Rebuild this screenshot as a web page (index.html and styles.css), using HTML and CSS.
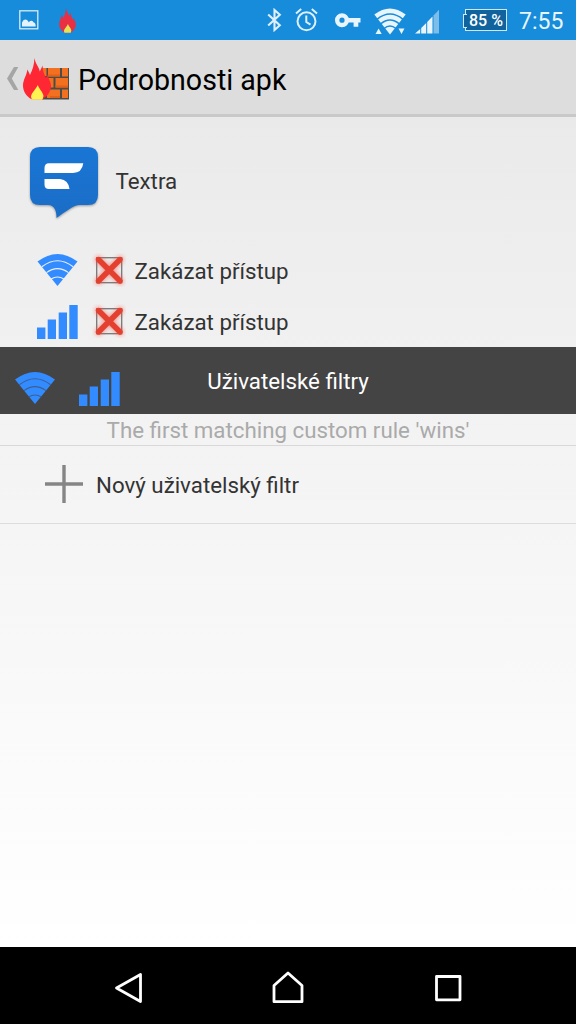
FILE: index.html
```html
<!DOCTYPE html>
<html lang="cs">
<head>
    <meta charset="UTF-8">
    <meta name="viewport" content="width=device-width, initial-scale=1.0">
    <title>Podrobnosti apk</title>
    <link rel="stylesheet" href="styles.css">
</head>
<body>
    <!-- shared icons -->
    <svg class="sprite" width="0" height="0">
        <symbol id="wifi" viewBox="0 0 40 32">
            <path fill="#338cff" d="M0 7.6Q20 -7.6 40 7.6L20 32Z"/>
            <g fill="none" stroke="var(--gap)" stroke-width="1.1">
                <path d="M4.4 12.8Q20 .6 35.6 12.8"/>
                <path d="M9 18.6Q20 10.6 31 18.6"/>
                <path d="M13.6 25Q20 21 26.4 25"/>
            </g>
        </symbol>
        <symbol id="cell" viewBox="0 0 41 34">
            <path fill="#338cff" d="M0 22.6h8.4V34H0zM10.7 14.5H19V34h-8.3zM21.7 7.4H30V34h-8.3zM32.3 0h8.4v34h-8.4z"/>
        </symbol>
        <symbol id="deny" viewBox="0 0 34 34">
            <rect x="4.7" y="4.7" width="25" height="25" fill="#ececec" stroke="#777" stroke-width="1.3"/>
            <path class="deny-glow" d="M6.5 6.5L28 28M28 6.5L6.5 28" stroke="#ff4030" stroke-width="7" stroke-linecap="round"/>
            <path d="M6.5 6.5L28 28M28 6.5L6.5 28" stroke="#e4402f" stroke-width="5.4" stroke-linecap="round"/>
        </symbol>
        <symbol id="flame" viewBox="0 0 28 42">
            <path fill="var(--fire)" d="M11.3 0C12.5 6 16 9 16.8 13.5L19.6 7.5C19.5 12 21 16 23 20L24.8 16.5C25 21 28 23.5 28 28C28 34 23.5 39 19.5 41.3H8.5C3 38 0 33 0 27.5C0 22 3.2 18.5 4.5 11.5L7 17C9.5 12 11.5 6 11.3 0Z"/>
            <path fill="var(--core)" d="M14.8 27C16 31 20 34 20.5 38L19.5 41.5H8.8L8 38.5C8.5 35 12.5 31.5 14.8 27Z"/>
        </symbol>
    </svg>

    <header class="status-bar">
        <svg class="st-image" width="20" height="20" viewBox="0 0 20 20">
            <rect x=".8" y=".8" width="18" height="18" fill="none" stroke="#d9edfa" stroke-width="1.3"/>
            <path fill="#e3f2fc" d="M3 16.5V12.5Q4.5 8.5 7.5 9.7Q9 10.5 9.8 12.2Q12.5 9.5 14.5 12.2Q16.7 12.5 16.7 16.5Z"/>
        </svg>
        <svg class="st-flame" width="17" height="25"><use href="#flame"/></svg>

        <svg class="st-bluetooth" width="15" height="24" viewBox="0 0 15 24">
            <path fill="none" stroke="#dff0fb" stroke-width="2.1" d="M1.2 6.5L12.8 17.3L7.5 22V2L12.8 6.7L1.2 17.5"/>
        </svg>
        <svg class="st-alarm" width="23" height="24" viewBox="0 0 23 24">
            <g fill="none" stroke="#dff0fb" stroke-width="2">
                <circle cx="11.5" cy="13.3" r="9"/>
                <path d="M11.3 7.5V14L15.5 16.6M1 5.4L6.2 1M16.8 1L22 5.4"/>
            </g>
        </svg>
        <svg class="st-key" width="26" height="15" viewBox="0 0 26 15">
            <circle cx="7" cy="7.2" r="4.8" fill="none" stroke="#e8f5fd" stroke-width="4.4"/>
            <path fill="#e8f5fd" d="M12.5 5H25.5V9.6H23.3V13.8H18.6V9.6H12.5Z"/>
        </svg>
        <svg class="st-wifi" width="32" height="27" viewBox="0 0 32 27">
            <path fill="#e8f5fd" d="M.3 6.6Q16 -5.4 31.7 6.6L16 26.5Z"/>
            <g fill="none" stroke="#168cda" stroke-width="1.6">
                <path d="M3 11.3Q16 .7 29 11.3"/>
                <path d="M6.500 16Q16 8 25.500 16"/>
                <path d="M10 20.500Q16 15.500 22 20.500"/>
            </g>
            <path fill="#e8f5fd" d="M1.5 26L4.6 20.500L7.700 26ZM24.500 20.500H30.500L27.500 26Z"/>
        </svg>
        <svg class="st-signal" width="25" height="25" viewBox="0 0 25 25">
            <path fill="#e8f5fd" d="M0 24.5L5.2 20V24.500ZM6.200 19L11.200 14V24.500H6.200ZM12.200 13L17.500 7.500V24.500H12.200Z"/>
            <path fill="#7dbdea" d="M18.500 6.500L24 .8V24.500H18.500Z"/>
        </svg>
        <div class="battery"><span>85 %</span></div>
        <time class="clock">7:55</time>
    </header>

    <div class="action-bar">
        <svg class="back-arrow" width="12" height="23" viewBox="0 0 12 23">
            <path fill="#a5a5a5" d="M7 0H11.3L4.8 11.5L11.3 23H7L0 11.5Z"/>
        </svg>
        <svg class="app-icon" width="47" height="42" viewBox="0 0 47 42">
            <rect x="19" y="10" width="27" height="31.5" fill="#4d4d48"/>
            <g fill="#f2701f">
                <path d="M19 10H23.500V18H19ZM25 10H37V18.500H25ZM39 10H45V18.500H39Z"/>
                <path d="M20 20H30.500V29.500H20ZM32.500 20H45V29.500H32.500Z"/>
                <path d="M24 31.500H37V40H24ZM39 31.500H45V40H39Z"/>
            </g>
            <path fill="#e45f18" d="M25 16.500H37V18.500H25ZM32.500 27.500H45V29.500H32.500ZM27 38H37V40H27Z"/>
            <use href="#flame" width="28" height="42"/>
        </svg>
        <h1>Podrobnosti apk</h1>
    </div>

    <main>
        <section class="app-info">
            <svg class="app-logo" width="76" height="78" viewBox="0 0 76 78">
                <defs>
                    <linearGradient id="logoFill" x1="0" y1="0" x2="0" y2="1">
                        <stop offset="0" stop-color="#1976d5"/>
                        <stop offset="1" stop-color="#1b6dc6"/>
                    </linearGradient>
                </defs>
                <path fill="url(#logoFill)" d="M14 3H62Q72 3 72 13V51Q72 61 62 61H54C47 61 38 69 30.5 74C30.5 68 29 61 22 61H14Q4 61 4 51V13Q4 3 14 3Z"/>
                <path fill="#fff" d="M23 19.3H57.3Q56 29 47 29H18.5V24Q18.5 19.3 23 19.3ZM18.5 35H34Q42.5 36 43.5 45H23Q18.5 45 18.5 40.5Z"/>
            </svg>
            <span>Textra</span>
        </section>

        <section class="access-list">
            <div class="access-row">
                <svg width="40" height="32"><use href="#wifi"/></svg>
                <svg class="check" width="34" height="34"><use href="#deny"/></svg>
                <span>Zakázat přístup</span>
            </div>
            <div class="access-row">
                <svg class="cell" width="41" height="34"><use href="#cell"/></svg>
                <svg class="check" width="34" height="34"><use href="#deny"/></svg>
                <span>Zakázat přístup</span>
            </div>
        </section>

        <section class="filters-header">
            <svg width="40" height="32"><use href="#wifi"/></svg>
            <svg class="cell" width="41" height="34"><use href="#cell"/></svg>
            <h2>Uživatelské filtry</h2>
        </section>

        <p class="hint">The first matching custom rule 'wins'</p>

        <div class="new-filter">
            <svg width="38" height="38" viewBox="0 0 38 38">
                <path stroke="#858585" stroke-width="3.4" d="M0 19H38M19 0V38"/>
            </svg>
            <span>Nový uživatelský filtr</span>
        </div>
    </main>

    <nav class="nav-bar">
        <svg width="32" height="34" viewBox="0 0 32 34">
            <path d="M28.500 3.500V30.500L4.500 17Z"/>
        </svg>
        <svg width="32" height="34" viewBox="0 0 32 34">
            <path d="M2 30.7V14.5L16 2L30 14.5V30.700Z"/>
        </svg>
        <svg width="32" height="34" viewBox="0 0 32 34">
            <path d="M4.500 5.500H28V28.800H4.500Z"/>
        </svg>
    </nav>
</body>
</html>
```

FILE: styles.css
```css
* {
    box-sizing: border-box;
}

body {
    margin: 0;
    height: 1024px;
    display: flex;
    flex-direction: column;
    font-family: Roboto, "Noto Sans", sans-serif;
    font-size: 22.3px;
    color: #333;
    background: #fff;
    overflow: hidden;
}

svg {
    display: block;
    flex: none;
}

.sprite {
    position: absolute;
}

h1, h2, p {
    margin: 0;
    font-weight: normal;
}

/* status bar */
.status-bar {
    height: 40px;
    flex: none;
    display: flex;
    align-items: center;
    padding: 0 13px 0 19px;
    background: #168cda;
}

.st-flame {
    margin-left: 20px;
    --fire: #e92f43;
    --core: #e6e255;
}

.st-bluetooth {
    margin-left: auto;
}

.st-alarm {
    margin-left: 13px;
}

.st-key {
    margin-left: 17px;
}

.st-wifi {
    margin-left: 13px;
    margin-top: 2px;
}

.st-signal {
    margin-left: 9px;
    margin-top: 2px;
}

.battery {
    position: relative;
    width: 42px;
    height: 22px;
    margin-left: 25px;
    border: 1.5px solid #cfe8f9;
    background: #10639c;
    color: #fff;
    font-size: 16px;
    font-weight: 500;
    line-height: 21px;
    text-align: center;
    white-space: nowrap;
}

/* battery terminal */
.battery::before {
    content: "";
    position: absolute;
    left: -3px;
    top: 4px;
    width: 3px;
    height: 12px;
    border: 1px solid #cfe8f9;
    border-right: none;
    background: #10639c;
}

.clock {
    width: 44px;
    margin-left: 12px;
    margin-top: 2px;
    font-size: 23px;
    color: #e8f5fd;
    white-space: nowrap;
}

/* action bar */
.action-bar {
    height: 77px;
    flex: none;
    display: flex;
    align-items: center;
    padding: 3px 0 0 7px;
    background: #ddd;
    border-bottom: 3px solid #c9c9c9;
}

.app-icon {
    margin-left: 4px;
    --fire: #ff2733;
    --core: #fff352;
}

.action-bar h1 {
    margin-left: 8px;
    margin-top: 2px;
    font-size: 28.6px;
    color: #000;
}

/* content */
main {
    height: 830px;
    flex: none;
    background: linear-gradient(#eaeaea, #f3f3f3 38%, #fff);
}

.app-info {
    height: 127px;
    display: flex;
    align-items: center;
    padding-left: 26px;
}

.app-logo {
    margin-top: 4px;
    filter: drop-shadow(0 1px 1px rgba(0, 0, 0, 0.35));
}

.app-info span {
    margin-left: 13.5px;
}

.access-list {
    height: 103px;
}

.access-row {
    height: 51.5px;
    display: flex;
    align-items: center;
    padding-left: 37px;
    --gap: #efefef;
}

.access-row svg:first-child {
    width: 41px;
}

.cell {
    margin-top: 2px;
}

.check {
    margin-left: 14px;
}

.access-row span {
    margin-left: 8.5px;
    margin-top: 2px;
}

.deny-glow {
    opacity: 0.5;
    filter: blur(2px);
}

.filters-header {
    position: relative;
    height: 67px;
    display: flex;
    align-items: center;
    gap: 24px;
    padding: 15px 0 0 15px;
    background: #444;
    --gap: #3e5f91;
}

.filters-header h2 {
    position: absolute;
    left: 0;
    right: 0;
    top: 21px;
    font-size: 22.3px;
    line-height: 26px;
    text-align: center;
    color: #fff;
}

.hint {
    height: 32px;
    line-height: 33px;
    text-align: center;
    color: #aaa;
    border-bottom: 1px solid #d9d9d9;
}

.new-filter {
    height: 78px;
    display: flex;
    align-items: center;
    padding-left: 45px;
    border-bottom: 1px solid #dcdcdc;
}

.new-filter svg {
    margin-top: -2px;
}

.new-filter span {
    margin-left: 13px;
}

/* navigation */
.nav-bar {
    height: 77px;
    flex: none;
    display: flex;
    justify-content: center;
    gap: 128px;
    padding-top: 24px;
    background: #000;
}

.nav-bar path {
    fill: none;
    stroke: #fff;
    stroke-width: 2.8;
    stroke-linejoin: round;
}
```
